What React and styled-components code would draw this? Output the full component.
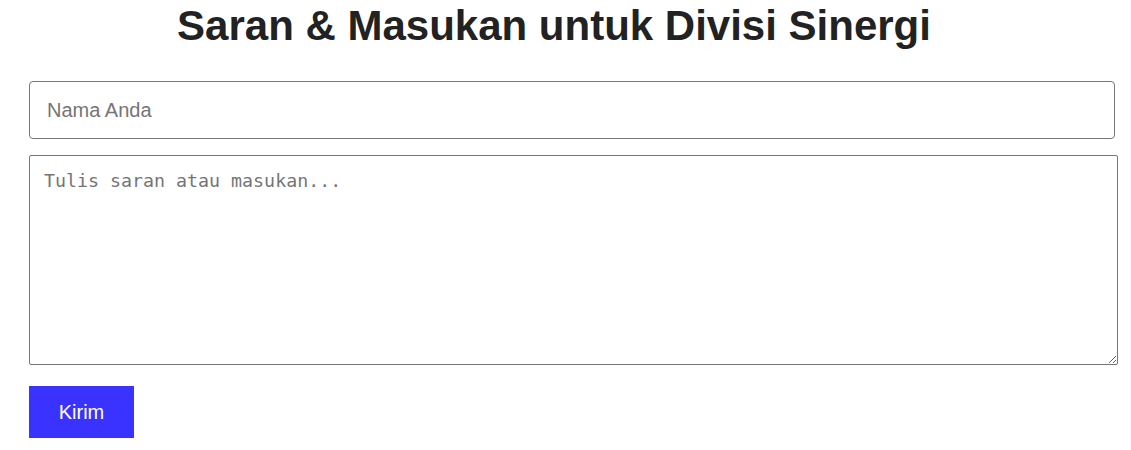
import styled, { createGlobalStyle } from "styled-components";

const Global = createGlobalStyle`
  body {
    margin: 0;
    background: #fff;
    font-family: "Liberation Sans", Arial, sans-serif;
  }
`;

export default function App() {
  return (
    <Page>
      <Global />
      <Title>Saran &amp; Masukan untuk Divisi Sinergi</Title>
      <Form onSubmit={(e) => e.preventDefault()}>
        <NameInput type="text" placeholder="Nama Anda" />
        <MessageArea placeholder="Tulis saran atau masukan..." />
        <SubmitButton type="submit">Kirim</SubmitButton>
      </Form>
    </Page>
  );
}

const Page = styled.div`
  width: 1050px;
  padding: 0 29px;
`;

const Title = styled.h1`
  margin: 0;
  padding-top: 2px;
  height: 81px;
  box-sizing: border-box;
  text-align: center;
  font-size: 42px;
  font-weight: 700;
  color: #222;
  line-height: 48px;
  white-space: nowrap;
`;

const Form = styled.form`
  display: flex;
  flex-direction: column;
  align-items: flex-start;
`;

const NameInput = styled.input`
  box-sizing: border-box;
  width: 1086px;
  height: 58px;
  padding: 0 17px;
  border: 1px solid #767676;
  border-radius: 4px;
  font-family: "Liberation Sans", Arial, sans-serif;
  font-size: 20px;
  color: #222;
  margin-bottom: 16px;

  &::placeholder {
    color: #757575;
  }
`;

const MessageArea = styled.textarea`
  box-sizing: border-box;
  width: 1089px;
  height: 210px;
  padding: 14px;
  border: 1px solid #767676;
  border-radius: 2px;
  font-family: "DejaVu Sans Mono", "Liberation Mono", monospace;
  font-size: 18.3px;
  color: #222;
  margin-bottom: 21px;

  &::placeholder {
    color: #757575;
  }
`;

const SubmitButton = styled.button`
  width: 105px;
  height: 52px;
  border: none;
  background: #3a33ff;
  color: #fff;
  font-family: "Liberation Sans", Arial, sans-serif;
  font-size: 20px;
  cursor: pointer;
`;
